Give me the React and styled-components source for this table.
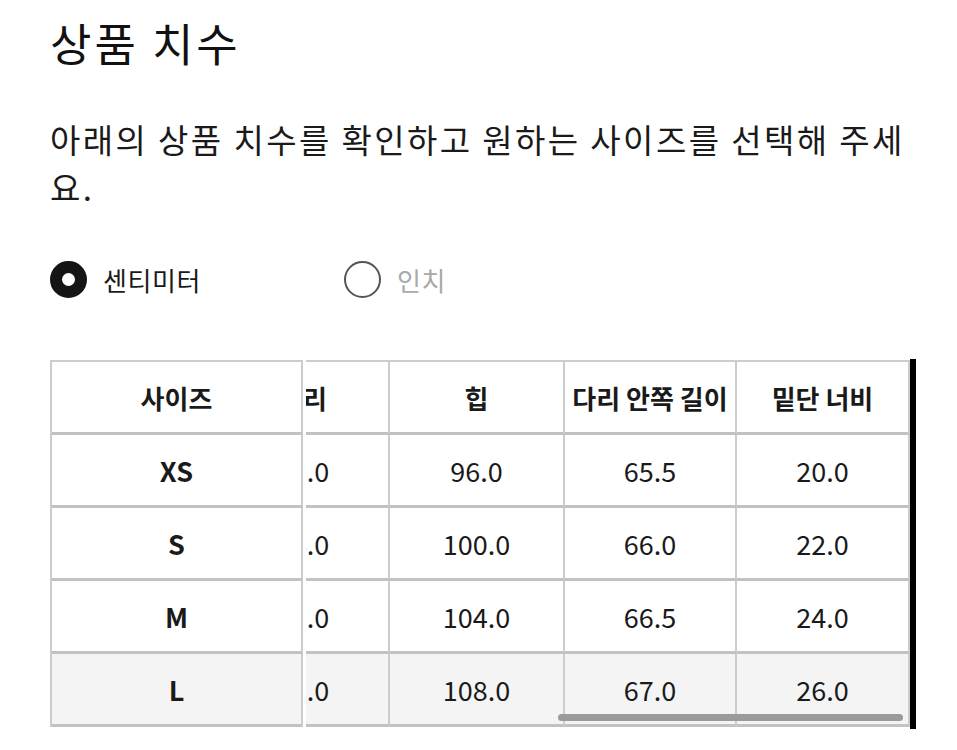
import React, { useLayoutEffect, useRef } from "react";
import styled, { createGlobalStyle } from "styled-components";

const GlobalStyle = createGlobalStyle`
  html, body {
    margin: 0;
    padding: 0;
    background: #ffffff;
  }
  body {
    font-family: "Noto Sans CJK KR", "Noto Sans", sans-serif;
    color: #1a1a1a;
  }
  * { box-sizing: border-box; }
`;

const Page = styled.div`
  width: 957px;
  padding: 13px 41px 0 50px;
`;

const Title = styled.h1`
  margin: 0;
  font-size: 45px;
  line-height: 60px;
  letter-spacing: 3px;
  font-weight: 400;
  color: #111;
`;

const Intro = styled.p`
  margin: 42px 0 0;
  font-size: 33px;
  line-height: 48px;
  letter-spacing: 2.4px;
  color: #1a1a1a;
  line-break: anywhere;
`;

const UnitPicker = styled.div`
  display: flex;
  align-items: center;
  gap: 143px;
  margin-top: 50px;
  height: 37px;
`;

const UnitOption = styled.label`
  display: flex;
  align-items: center;
  gap: 16px;
  font-size: 26px;
  letter-spacing: 0.6px;
  color: ${(p) => (p.$checked ? "#1a1a1a" : "#a9a9a9")};
  cursor: pointer;
`;

const RadioDot = styled.span`
  width: 37px;
  height: 37px;
  border-radius: 50%;
  background: #fff;
  border: ${(p) => (p.$checked ? "12px solid #151515" : "2px solid #555")};
  flex-shrink: 0;
`;

const TableArea = styled.div`
  display: flex;
  gap: 3px;
  margin-top: 62px;
  align-items: flex-start;
`;

const SizeTable = styled.table`
  border-collapse: separate;
  border-spacing: 0;
  width: 253px;
  table-layout: fixed;
  border-left: 2px solid #cccccc;
  border-top: 2px solid #cccccc;
`;

const ScrollFrame = styled.div`
  position: relative;
  width: 610px;
  border-right: 6px solid #000;
  margin-top: -1px;
  padding: 1px 0 2px;
`;

const ScrollViewport = styled.div`
  width: 604px;
  overflow-x: auto;
  scrollbar-width: none;
  &::-webkit-scrollbar {
    display: none;
  }
`;

const MeasureTable = styled.table`
  border-collapse: separate;
  border-spacing: 0;
  table-layout: fixed;
  width: 1034px;
  border-top: 2px solid #cccccc;
`;

const Row = styled.tr`
  background: ${(p) => (p.$shaded ? "#f4f4f4" : "#ffffff")};
`;

const HeadCell = styled.th`
  height: 73px;
  padding: 0;
  font-size: 26px;
  font-weight: 700;
  color: #1a1a1a;
  text-align: center;
  white-space: nowrap;
  border-right: 2px solid #cccccc;
  border-bottom: 3px solid #c2c2c2;
`;

const Cell = styled.td`
  height: 73px;
  padding: 0;
  font-size: 27px;
  font-weight: ${(p) => (p.$bold ? 700 : 400)};
  color: #1a1a1a;
  text-align: center;
  white-space: nowrap;
  border-right: 2px solid #cccccc;
  border-bottom: 3px solid #c2c2c2;
`;

const ScrollThumb = styled.div`
  position: absolute;
  right: 7px;
  bottom: 8px;
  width: 345px;
  height: 7px;
  border-radius: 4px;
  background: #9a9a9a;
`;

const columns = [
  { label: "총 길이", width: 171 },
  { label: "밑위", width: 171 },
  { label: "허리", width: 172 },
  { label: "힙", width: 175 },
  { label: "다리 안쪽 길이", width: 172 },
  { label: "밑단 너비", width: 173 },
];

const rows = [
  { size: "XS", values: ["98.0", "25.0", "70.0", "96.0", "65.5", "20.0"] },
  { size: "S", values: ["99.0", "26.0", "74.0", "100.0", "66.0", "22.0"] },
  { size: "M", values: ["100.0", "27.0", "78.0", "104.0", "66.5", "24.0"] },
  { size: "L", values: ["101.0", "28.0", "82.0", "108.0", "67.0", "26.0"] },
];

export default function App() {
  const viewportRef = useRef(null);

  useLayoutEffect(() => {
    const el = viewportRef.current;
    if (el) el.scrollLeft = el.scrollWidth;
  }, []);

  return (
    <>
      <GlobalStyle />
      <Page>
        <Title>상품 치수</Title>
        <Intro>아래의 상품 치수를 확인하고 원하는 사이즈를 선택해 주세요.</Intro>

        <UnitPicker>
          <UnitOption $checked>
            <RadioDot $checked />
            센티미터
          </UnitOption>
          <UnitOption>
            <RadioDot />
            인치
          </UnitOption>
        </UnitPicker>

        <TableArea>
          <SizeTable>
            <thead>
              <Row>
                <HeadCell>사이즈</HeadCell>
              </Row>
            </thead>
            <tbody>
              {rows.map((r, i) => (
                <Row key={r.size} $shaded={i === rows.length - 1}>
                  <Cell $bold>{r.size}</Cell>
                </Row>
              ))}
            </tbody>
          </SizeTable>

          <ScrollFrame>
            <ScrollViewport ref={viewportRef}>
              <MeasureTable>
                <colgroup>
                  {columns.map((c) => (
                    <col key={c.label} style={{ width: c.width }} />
                  ))}
                </colgroup>
                <thead>
                  <Row>
                    {columns.map((c) => (
                      <HeadCell key={c.label}>{c.label}</HeadCell>
                    ))}
                  </Row>
                </thead>
                <tbody>
                  {rows.map((r, i) => (
                    <Row key={r.size} $shaded={i === rows.length - 1}>
                      {r.values.map((v, j) => (
                        <Cell key={j}>{v}</Cell>
                      ))}
                    </Row>
                  ))}
                </tbody>
              </MeasureTable>
            </ScrollViewport>
            <ScrollThumb />
          </ScrollFrame>
        </TableArea>
      </Page>
    </>
  );
}
